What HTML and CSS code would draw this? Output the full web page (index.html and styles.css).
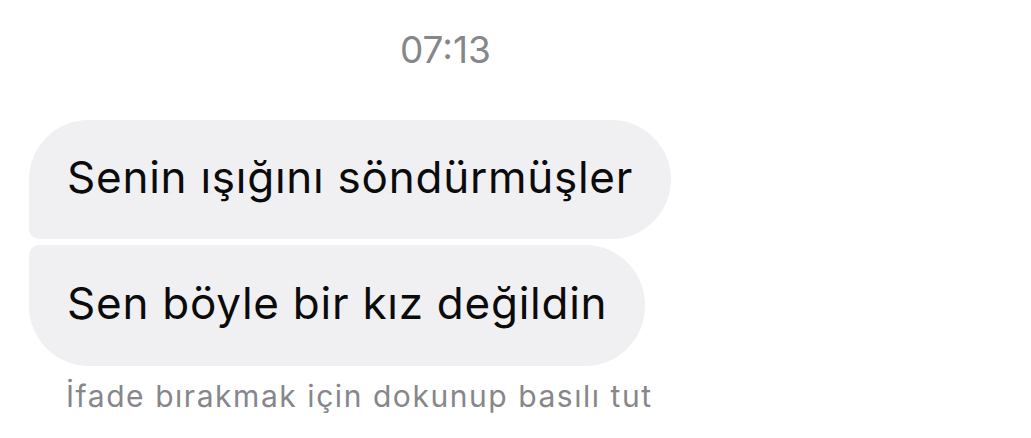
FILE: index.html
```html
<!DOCTYPE html>
<html lang="tr">
<head>
<meta charset="utf-8">
<link rel="stylesheet" href="styles.css">
</head>
<body>
<div class="chat">
  <div class="time">07:13</div>
  <div class="messages">
    <div class="bubble first">Senin ışığını söndürmüşler</div>
    <div class="bubble last">Sen böyle bir kız değildin</div>
  </div>
  <div class="hint">İfade bırakmak için dokunup basılı tut</div>
</div>
</body>
</html>
```
FILE: styles.css
```css
html, body {
  margin: 0;
  padding: 0;
  background: #ffffff;
}
body {
  width: 1031px;
  height: 438px;
  overflow: hidden;
  font-family: Inter, "Noto Sans", sans-serif;
}
.chat {
  display: flex;
  flex-direction: column;
  align-items: flex-start;
  padding: 28px 0 0 29px;
}
.time {
  margin-left: 371px;
  color: #86868b;
  font-size: 37px;
  line-height: 44px;
  height: 44px;
  margin-bottom: 48px;
}
.messages {
  display: flex;
  flex-direction: column;
  align-items: flex-start;
  gap: 6px;
}
.bubble {
  background: #f0f0f3;
  color: #0b0b0b;
  font-size: 44px;
  letter-spacing: 0.75px;
  height: 119px;
  display: flex;
  align-items: center;
  padding: 0 38px 5px;
  box-sizing: border-box;
}
.bubble.first {
  border-radius: 60px 60px 60px 10px;
}
.bubble.last {
  border-radius: 10px 60px 60px 60px;
  height: 121px;
}
.hint {
  margin-top: 10px;
  padding-left: 37px;
  color: #86868b;
  font-size: 30px;
  line-height: 40px;
  letter-spacing: 1.55px;
}
```
